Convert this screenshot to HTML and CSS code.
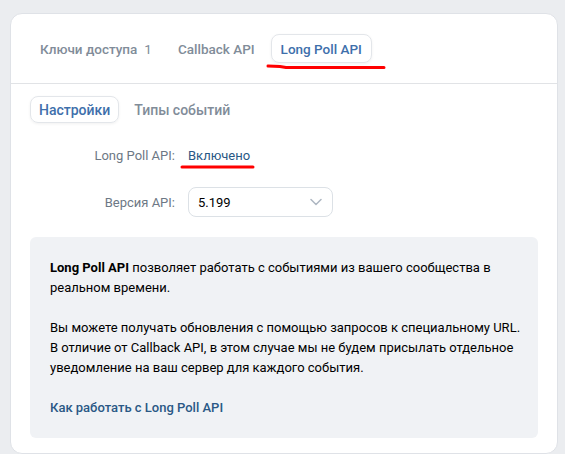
FILE: index.html
```html
<!DOCTYPE html>
<html lang="ru">
<head>
<meta charset="utf-8">
<link rel="stylesheet" href="styles.css">
</head>
<body>
<div class="card">
  <div class="tabs">
    <div class="tab">Ключи доступа<span class="count">1</span></div>
    <div class="tab">Callback API</div>
    <div class="tab active">Long Poll API</div>
  </div>
  <div class="content">
    <div class="subtabs">
      <div class="subtab active">Настройки</div>
      <div class="subtab">Типы событий</div>
    </div>
    <div class="form">
      <div class="row">
        <div class="label">Long Poll API:</div>
        <div class="value"><span class="link-value">Включено</span></div>
      </div>
      <div class="row">
        <div class="label">Версия API:</div>
        <div class="value">
          <div class="select">
            <span>5.199</span>
            <svg class="chevron" width="12" height="8" viewBox="0 0 12 8"><path d="M1 1.5 L6 6.5 L11 1.5" fill="none" stroke="#aeb7c2" stroke-width="1.5" stroke-linecap="round" stroke-linejoin="round"/></svg>
          </div>
        </div>
      </div>
    </div>
    <div class="info">
      <p><b>Long Poll API</b> позволяет работать с событиями из вашего сообщества в реальном времени.</p>
      <p>Вы можете получать обновления с помощью запросов к специальному URL. В отличие от Callback API, в этом случае мы не будем присылать отдельное уведомление на ваш сервер для каждого события.</p>
      <p><a class="info-link" href="#">Как работать с Long Poll API</a></p>
    </div>
  </div>
</div>
<svg class="annot" width="565" height="454" viewBox="0 0 565 454">
  <path d="M268 66 L280 66.5 L286 67.5 L384 67.5" fill="none" stroke="#ff0000" stroke-width="3" stroke-linecap="round" stroke-linejoin="round"/>
  <path d="M182 167 L253 167" fill="none" stroke="#ff0000" stroke-width="3" stroke-linecap="round"/>
</svg>
</body>
</html>
```
FILE: styles.css
```css
html, body {
  margin: 0;
  padding: 0;
}
body {
  background: #ebedf0;
  font-family: Roboto, "Noto Sans", Arial, sans-serif;
  font-size: 13px;
  color: #000;
  width: 565px;
  height: 454px;
  overflow: hidden;
  position: relative;
}
.card {
  margin: 13px 7px 0 10px;
  height: 441px;
  background: #fff;
  border: 1px solid #dfe2e7;
  border-radius: 12px;
  box-sizing: border-box;
}
.tabs {
  display: flex;
  align-items: center;
  gap: 6px;
  padding: 20px 19px 20px 19px;
  border-bottom: 1px solid #e1e3e6;
}
.tab {
  height: 29px;
  box-sizing: border-box;
  padding: 0 9px;
  display: flex;
  align-items: center;
  font-size: 13.5px;
  font-weight: 500;
  color: #818c99;
  border: 1px solid transparent;
  border-radius: 8px;
}
.tab .count {
  margin-left: 7px;
  font-weight: 400;
}
.tab.active {
  color: #3e6fab;
  border-color: #e3e6ea;
  box-shadow: 0 1px 3px rgba(0,0,0,0.06);
}
.content {
  padding: 12px 19px 0 19px;
}
.subtabs {
  display: flex;
  gap: 6px;
}
.subtab {
  height: 27px;
  box-sizing: border-box;
  padding: 0 8px;
  display: flex;
  align-items: center;
  font-size: 14px;
  font-weight: 500;
  color: #818c99;
  border: 1px solid transparent;
  border-radius: 8px;
}
.subtab.active {
  color: #3e6fab;
  border-color: #e3e6ea;
  box-shadow: 0 1px 3px rgba(0,0,0,0.06);
}
.form {
  padding-top: 24px;
  display: flex;
  flex-direction: column;
  gap: 24px;
}
.row {
  display: flex;
  align-items: center;
  gap: 13px;
  min-height: 16px;
}
.label {
  width: 145px;
  text-align: right;
  color: #6d7885;
  font-size: 13px;
}
.link-value {
  color: #2a5885;
  font-size: 13px;
}
.select {
  width: 145px;
  height: 30px;
  box-sizing: border-box;
  border: 1px solid #dce1e6;
  border-radius: 8px;
  padding: 0 10px 0 9px;
  display: flex;
  align-items: center;
  justify-content: space-between;
  font-size: 13px;
  color: #000;
}
.info {
  margin-top: 20px;
  background: #f0f2f5;
  border-radius: 6px;
  padding: 21px 10px 20px 20px;
  line-height: 20px;
  color: #000;
}
.info p {
  margin: 0 0 20px 0;
}
.info p:last-child {
  margin-bottom: 0;
}
.info b {
  font-weight: 700;
}
.info-link {
  color: #2a5885;
  font-weight: 500;
  text-decoration: none;
}
.annot {
  position: absolute;
  left: 0;
  top: 0;
  pointer-events: none;
}
```
